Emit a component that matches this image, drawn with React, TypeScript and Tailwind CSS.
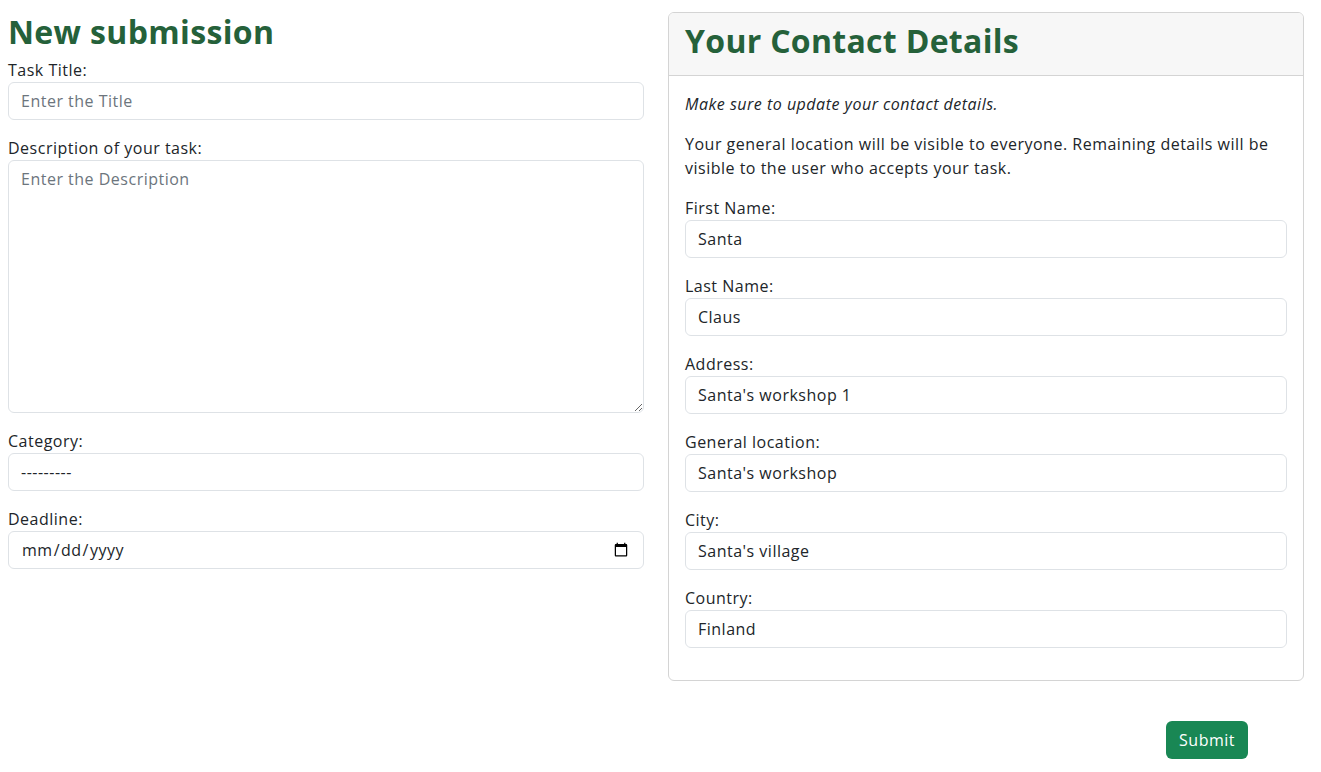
import React from "react"

const body = { fontFamily: '"Open Sans", "Noto Sans", sans-serif', letterSpacing: "0.5px" }
const head = { fontFamily: '"Open Sans", "Noto Sans", sans-serif' }

function Field({ label, value, placeholder }: { label: string; value?: string; placeholder?: string }) {
  return (
    <div className="mb-4">
      <label className="block text-[16px] leading-6 text-[#212529]">{label}</label>
      <input
        type="text"
        defaultValue={value}
        placeholder={placeholder}
        className="block w-full h-[38px] rounded-md border border-[#dee2e6] bg-white px-3 text-[16px] text-[#212529] placeholder:text-[#6c757d] outline-none"
        style={body}
      />
    </div>
  )
}

export default function App() {
  const contact = [
    { label: "First Name:", value: "Santa" },
    { label: "Last Name:", value: "Claus" },
    { label: "Address:", value: "Santa's workshop 1" },
    { label: "General location:", value: "Santa's workshop" },
    { label: "City:", value: "Santa's village" },
    { label: "Country:", value: "Finland" },
  ]

  return (
    <div className="min-h-screen bg-white pl-2 pr-[17px] pt-[12px] text-[#212529]" style={body}>
      <div className="grid grid-cols-2 gap-6 items-start">
        {/* left column */}
        <div>
          <h2 className="text-[32px] leading-[38px] font-bold text-[#25613a] mb-[7px] mt-[1px] tracking-[0.35px]" style={head}>
            New submission
          </h2>
          <Field label="Task Title:" placeholder="Enter the Title" />
          <div className="mb-4">
            <label className="block text-[16px] leading-6">Description of your task:</label>
            <textarea
              placeholder="Enter the Description"
              className="block w-full h-[253px] rounded-md border border-[#dee2e6] bg-white px-3 py-[6px] text-[16px] placeholder:text-[#6c757d] outline-none"
              style={body}
            />
          </div>
          <div className="mb-4">
            <label className="block text-[16px] leading-6">Category:</label>
            <select
              className="block w-full h-[38px] appearance-none rounded-md border border-[#dee2e6] bg-white px-3 text-[16px] text-[#212529] outline-none"
              style={body}
              defaultValue=""
            >
              <option value="">---------</option>
            </select>
          </div>
          <div className="mb-4">
            <label className="block text-[16px] leading-6">Deadline:</label>
            <input
              type="date"
              className="block w-full h-[38px] rounded-md border border-[#dee2e6] bg-white px-3 text-[16px] text-[#212529] outline-none"
              style={body}
            />
          </div>
        </div>

        {/* right column */}
        <div className="rounded-md border border-[#d4d4d4] overflow-hidden">
          <div className="bg-[#f7f7f7] border-b border-[#d4d4d4] px-4 pt-[9px] pb-[15px]">
            <h2 className="text-[32px] leading-[38px] font-bold text-[#25613a] tracking-[0.3px]" style={head}>
              Your Contact Details
            </h2>
          </div>
          <div className="p-4">
            <p className="italic text-[16px] leading-6 mb-4">Make sure to update your contact details.</p>
            <p className="text-[16px] leading-6 mb-4">
              Your general location will be visible to everyone. Remaining details will be visible to the user who accepts your task.
            </p>
            {contact.map((c) => (
              <Field key={c.label} label={c.label} value={c.value} />
            ))}
          </div>
        </div>
      </div>

      <div className="flex justify-end pr-[56px] mt-[40px]">
        <button className="h-[38px] rounded-md bg-[#198754] px-[13px] text-[16px] text-white" style={body}>
          Submit
        </button>
      </div>
    </div>
  )
}
